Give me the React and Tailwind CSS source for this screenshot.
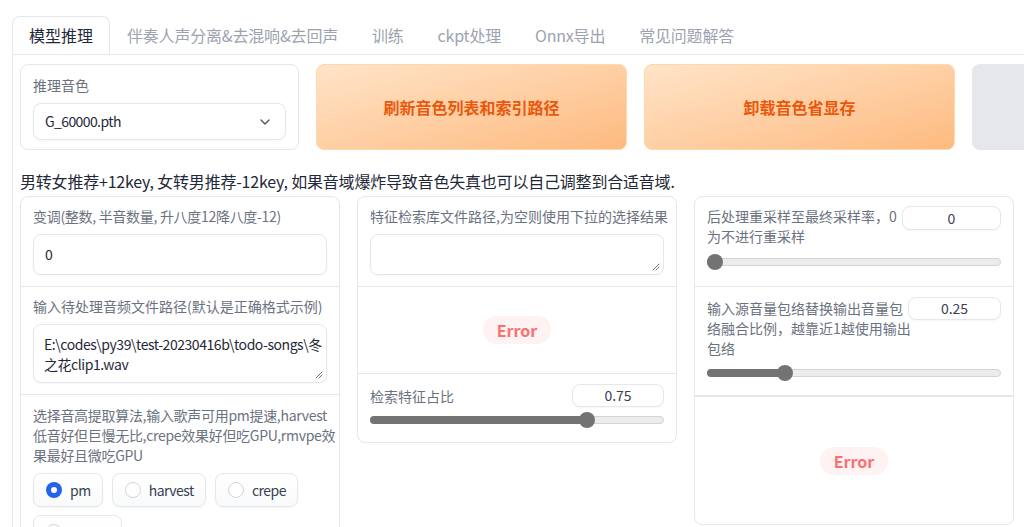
import React from "react";
import { ChevronDown } from "lucide-react";

const tabs = ["模型推理", "伴奏人声分离&去混响&去回声", "训练", "ckpt处理", "Onnx导出", "常见问题解答"];

function Resize() {
  return (
    <svg width="8" height="8" viewBox="0 0 8 8" className="absolute right-[3px] bottom-[3px]">
      <path d="M7 1L1 7M7 4L4 7" stroke="#6b7280" strokeWidth="1" strokeLinecap="round" />
    </svg>
  );
}

function Slider({ pct }) {
  return (
    <div className="relative h-4">
      <div className="absolute left-0 right-0 top-[4px] h-[8px] rounded-full bg-[#ececec] border border-[#d4d4d4]" />
      <div
        className="absolute left-0 top-[4px] h-[8px] rounded-l-full bg-[#737373]"
        style={{ width: `calc(${pct} * (100% - 16px) + 8px)` }}
      />
      <div
        className="absolute top-0 w-4 h-4 rounded-full bg-[#737373]"
        style={{ left: `calc(${pct} * (100% - 16px))` }}
      />
    </div>
  );
}

function NumBox({ value, w, h }) {
  return (
    <div
      className={`${w} ${h} shrink-0 flex items-center justify-center rounded-[8px] border border-[#e5e7eb] bg-white text-[14px] text-[#374151] shadow-[0_1px_2px_rgba(0,0,0,0.04)]`}
    >
      {value}
    </div>
  );
}

function ErrorBadge() {
  return (
    <span className="px-[14px] h-[28px] flex items-center rounded-full bg-[#fef2f2] text-[#f87171] text-[16px] font-semibold">
      Error
    </span>
  );
}

function Radio({ label, checked }) {
  return (
    <div className="h-[34px] flex items-center gap-2 pl-3 pr-[11px] rounded-[8px] border border-[#e5e7eb] bg-linear-to-b from-white to-[#f9fafb] shadow-[0_1px_2px_rgba(0,0,0,0.04)] text-[14px] text-[#374151] tracking-[-0.5px]">
      {checked ? (
        <span className="w-4 h-4 rounded-full bg-[#2563eb] flex items-center justify-center">
          <span className="w-[6px] h-[6px] rounded-full bg-white" />
        </span>
      ) : (
        <span className="w-4 h-4 rounded-full border border-[#d1d5db] bg-white" />
      )}
      {label}
    </div>
  );
}

export default function App() {
  return (
    <div className="w-[1024px] h-[527px] overflow-hidden bg-white font-['Noto_Sans_CJK_SC','Noto_Sans',sans-serif]">
      <div className="pt-4 pl-3">
        {/* tab nav */}
        <div className="flex border-b border-[#e5e7eb]">
          {tabs.map((t, i) =>
            i === 0 ? (
              <div
                key={t}
                className="h-[38px] px-4 flex items-center -mb-px bg-white border border-[#e5e7eb] border-b-white rounded-t-[8px] text-[16px] text-[#1f2937]"
              >
                {t}
              </div>
            ) : (
              <div key={t} className="h-[38px] px-[17px] flex items-center text-[16px] text-[#9ca3af] whitespace-nowrap tracking-[-0.2px]">
                {t}
              </div>
            )
          )}
        </div>

        {/* tab panel */}
        <div className="border-l border-[#e5e7eb] pl-[7px] pt-[9px]">
          <div className="flex gap-[17px] h-[86px]">
            <div className="w-[279px] shrink-0 rounded-[8px] border border-[#e5e7eb] bg-white px-3 pt-[10px]">
              <div className="text-[14px] leading-5 text-[#6b7280] mb-2">推理音色</div>
              <div className="h-[37px] flex items-center justify-between pl-[11px] pr-3 rounded-[8px] border border-[#e5e7eb] bg-white text-[14px] text-[#1f2937] shadow-[0_1px_2px_rgba(0,0,0,0.04)]">
                <span className="tracking-[-0.6px]">G_60000.pth</span>
                <ChevronDown size={16} className="text-[#4b5563]" />
              </div>
            </div>
            <button className="w-[311px] shrink-0 rounded-[8px] border border-[#fed7aa] bg-linear-to-br from-[#ffe4c8] to-[#fdba7f] text-[16px] font-bold text-[#ea580c]">
              刷新音色列表和索引路径
            </button>
            <button className="w-[311px] shrink-0 rounded-[8px] border border-[#fed7aa] bg-linear-to-br from-[#ffe4c8] to-[#fdba7f] text-[16px] font-bold text-[#ea580c]">
              卸载音色省显存
            </button>
            <button className="w-[311px] shrink-0 rounded-[8px] bg-[#e5e7eb]" />
          </div>

          <p className="mt-[19px] text-[16px] leading-6 text-[#1f2937] whitespace-nowrap tracking-[-0.2px]">
            男转女推荐+12key, 女转男推荐-12key, 如果音域爆炸导致音色失真也可以自己调整到合适音域.
          </p>

          <div className="mt-[3px] flex items-start gap-[17px]">
            {/* column 1 */}
            <div className="w-[320px] shrink-0 rounded-[8px] border border-[#e5e7eb] bg-white">
              <div className="px-3 pt-[9px] pb-[11px]">
                <div className="text-[14px] leading-5 text-[#6b7280] mb-2 whitespace-nowrap tracking-[-0.3px]">变调(整数, 半音数量, 升八度12降八度-12)</div>
                <div className="h-[41px] flex items-center px-[11px] rounded-[8px] border border-[#e5e7eb] text-[14px] text-[#1f2937] shadow-[0_1px_2px_rgba(0,0,0,0.04)]">
                  0
                </div>
              </div>
              <div className="border-t border-[#e5e7eb] px-3 pt-[9px] pb-[11px]">
                <div className="text-[14px] leading-5 text-[#6b7280] mb-2 whitespace-nowrap">输入待处理音频文件路径(默认是正确格式示例)</div>
                <div className="relative h-[59px] px-[10px] py-[9px] rounded-[8px] border border-[#e5e7eb] text-[14px] leading-5 text-[#1f2937] shadow-[0_1px_2px_rgba(0,0,0,0.04)] whitespace-nowrap tracking-[-0.45px]">
                  <span className="block">E:\codes\py39\test-20230416b\todo-songs\冬</span>
                  <span className="block">之花clip1.wav</span>
                  <Resize />
                </div>
              </div>
              <div className="border-t border-[#e5e7eb] px-3 pt-[10px] pb-3">
                <div className="text-[14px] leading-5 text-[#6b7280] whitespace-nowrap tracking-[-0.3px]">
                  <span className="block">选择音高提取算法,输入歌声可用pm提速,harvest</span>
                  <span className="block">低音好但巨慢无比,crepe效果好但吃GPU,rmvpe效</span>
                  <span className="block">果最好且微吃GPU</span>
                </div>
                <div className="mt-2 flex flex-wrap gap-x-[9px] gap-y-2">
                  <Radio label="pm" checked />
                  <Radio label="harvest" />
                  <Radio label="crepe" />
                  <Radio label="rmvpe" />
                </div>
              </div>
            </div>

            {/* column 2 */}
            <div className="w-[320px] shrink-0 rounded-[8px] border border-[#e5e7eb] bg-white">
              <div className="px-3 pt-[9px] pb-[11px]">
                <div className="text-[14px] leading-5 text-[#6b7280] mb-2 whitespace-nowrap">特征检索库文件路径,为空则使用下拉的选择结果</div>
                <div className="relative h-[41px] rounded-[8px] border border-[#e5e7eb] shadow-[0_1px_2px_rgba(0,0,0,0.04)]">
                  <Resize />
                </div>
              </div>
              <div className="border-t border-[#e5e7eb] h-[87px] flex items-center justify-center">
                <ErrorBadge />
              </div>
              <div className="border-t border-[#e5e7eb] px-3 pt-[10px] pb-[14px]">
                <div className="flex items-center justify-between">
                  <span className="text-[14px] leading-5 text-[#6b7280]">检索特征占比</span>
                  <NumBox value="0.75" w="w-[92px]" h="h-[23px]" />
                </div>
                <div className="mt-[5px]">
                  <Slider pct={0.75} />
                </div>
              </div>
            </div>

            {/* column 3 */}
            <div className="w-[320px] shrink-0 rounded-[8px] border border-[#e5e7eb] bg-white">
              <div className="px-3 pt-[9px] pb-4">
                <div className="flex items-start gap-[9px]">
                  <span className="flex-1 min-w-0 text-[14px] leading-5 text-[#6b7280] whitespace-nowrap">
                    <span className="block">后处理重采样至最终采样率，0</span>
                    <span className="block">为不进行重采样</span>
                  </span>
                  <NumBox value="0" w="w-[99px]" h="h-[24px]" />
                </div>
                <div className="mt-2">
                  <Slider pct={0} />
                </div>
              </div>
              <div className="border-t border-[#e5e7eb] px-3 pt-[10px] pb-[14px]">
                <div className="flex items-start gap-[6px]">
                  <span className="flex-1 min-w-0 pt-px text-[14px] leading-5 text-[#6b7280] whitespace-nowrap">
                    <span className="block">输入源音量包络替换输出音量包</span>
                    <span className="block">络融合比例，越靠近1越使用输出</span>
                    <span className="block">包络</span>
                  </span>
                  <NumBox value="0.25" w="w-[93px]" h="h-[23px]" />
                </div>
                <div className="mt-[7px]">
                  <Slider pct={0.25} />
                </div>
              </div>
              <div className="border-t-2 border-[#e5e7eb] h-[129px] flex items-center justify-center">
                <ErrorBadge />
              </div>
            </div>
          </div>
        </div>
      </div>
    </div>
  );
}
